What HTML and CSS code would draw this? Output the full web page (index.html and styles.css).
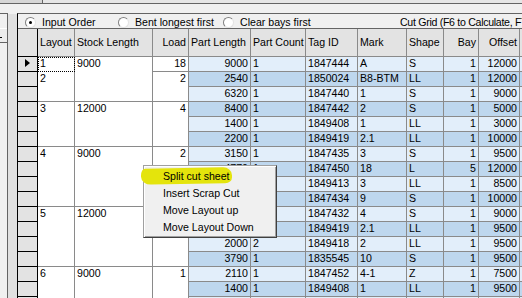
FILE: index.html
```html
<!DOCTYPE html>
<html>
<head>
<link rel="stylesheet" href="styles.css">
</head>
<body>

<div class="win">
    <div class="topbar"><div class="tbtn"></div></div>
    <div class="spacer"></div>

    <div class="main">
        <div class="lpanel"><div class="sbtn"></div></div>
        <div class="lstrip"></div>

        <div class="gridpanel">
            <div class="opts">
                <label class="opt"><span class="radio on"></span>Input Order</label>
                <label class="opt"><span class="radio"></span>Bent longest first</label>
                <label class="opt"><span class="radio"></span>Clear bays first</label>
                <span class="gridtitle">Cut Grid (F6 to Calculate, F7 to Print)</span>
            </div>

            <table class="cut">
                <colgroup>
                    <col class="c-rh"><col class="c-lay"><col class="c-stock"><col class="c-load">
                    <col class="c-plen"><col class="c-pcnt"><col class="c-tag"><col class="c-mark">
                    <col class="c-shape"><col class="c-bay"><col class="c-off"><col class="c-x">
                </colgroup>
                <thead>
                    <tr>
                        <th class="rh"></th>
                        <th>Layout</th>
                        <th>Stock Length</th>
                        <th class="num">Load</th>
                        <th>Part Length</th>
                        <th>Part Count</th>
                        <th>Tag ID</th>
                        <th>Mark</th>
                        <th>Shape</th>
                        <th class="num">Bay</th>
                        <th class="num">Offset</th>
                        <th></th>
                    </tr>
                </thead>
                <tbody>
                    <tr class="lt">
                        <td class="rh"><span class="arrow"></span></td>
                        <td class="w focus">1</td>
                        <td class="w" rowspan="3">9000</td>
                        <td class="w num">18</td>
                        <td class="num">9000</td><td>1</td><td>1847444</td><td>A</td><td>S</td><td class="num">1</td><td class="num">12000</td><td></td>
                    </tr>
                    <tr class="dk">
                        <td class="rh"></td>
                        <td class="w" rowspan="2">2</td>
                        <td class="w num" rowspan="2">2</td>
                        <td class="num">2540</td><td>1</td><td>1850024</td><td>B8-BTM</td><td>LL</td><td class="num">1</td><td class="num">12000</td><td></td>
                    </tr>
                    <tr class="lt">
                        <td class="rh"></td>
                        <td class="num">6320</td><td>1</td><td>1847440</td><td>1</td><td>S</td><td class="num">1</td><td class="num">9000</td><td></td>
                    </tr>
                    <tr class="dk">
                        <td class="rh"></td>
                        <td class="w" rowspan="3">3</td>
                        <td class="w" rowspan="3">12000</td>
                        <td class="w num" rowspan="3">4</td>
                        <td class="num">8400</td><td>1</td><td>1847442</td><td>2</td><td>S</td><td class="num">1</td><td class="num">5000</td><td></td>
                    </tr>
                    <tr class="lt">
                        <td class="rh"></td>
                        <td class="num">1400</td><td>1</td><td>1849408</td><td>1</td><td>LL</td><td class="num">1</td><td class="num">3000</td><td></td>
                    </tr>
                    <tr class="dk">
                        <td class="rh"></td>
                        <td class="num">2200</td><td>1</td><td>1849419</td><td>2.1</td><td>LL</td><td class="num">1</td><td class="num">10000</td><td></td>
                    </tr>
                    <tr class="lt">
                        <td class="rh"></td>
                        <td class="w" rowspan="4">4</td>
                        <td class="w" rowspan="4">9000</td>
                        <td class="w num" rowspan="4">2</td>
                        <td class="num">3150</td><td>1</td><td>1847435</td><td>3</td><td>S</td><td class="num">1</td><td class="num">9500</td><td></td>
                    </tr>
                    <tr class="dk">
                        <td class="rh"></td>
                        <td class="num">4770</td><td>1</td><td>1847450</td><td>18</td><td>L</td><td class="num">5</td><td class="num">12000</td><td></td>
                    </tr>
                    <tr class="lt">
                        <td class="rh"></td>
                        <td class="num">1860</td><td>1</td><td>1849413</td><td>3</td><td>LL</td><td class="num">1</td><td class="num">8500</td><td></td>
                    </tr>
                    <tr class="dk">
                        <td class="rh"></td>
                        <td class="num">2380</td><td>1</td><td>1847434</td><td>9</td><td>S</td><td class="num">1</td><td class="num">10000</td><td></td>
                    </tr>
                    <tr class="lt">
                        <td class="rh"></td>
                        <td class="w" rowspan="4">5</td>
                        <td class="w" rowspan="4">12000</td>
                        <td class="w num" rowspan="4">4</td>
                        <td class="num">5450</td><td>1</td><td>1847432</td><td>4</td><td>S</td><td class="num">1</td><td class="num">9000</td><td></td>
                    </tr>
                    <tr class="dk">
                        <td class="rh"></td>
                        <td class="num">2200</td><td>1</td><td>1849419</td><td>2.1</td><td>LL</td><td class="num">1</td><td class="num">9500</td><td></td>
                    </tr>
                    <tr class="lt">
                        <td class="rh"></td>
                        <td class="num">2000</td><td>2</td><td>1849418</td><td>2</td><td>LL</td><td class="num">1</td><td class="num">9500</td><td></td>
                    </tr>
                    <tr class="dk">
                        <td class="rh"></td>
                        <td class="num">3790</td><td>1</td><td>1835545</td><td>10</td><td>S</td><td class="num">1</td><td class="num">9500</td><td></td>
                    </tr>
                    <tr class="lt">
                        <td class="rh"></td>
                        <td class="w" rowspan="3">6</td>
                        <td class="w" rowspan="3">9000</td>
                        <td class="w num" rowspan="3">1</td>
                        <td class="num">2110</td><td>1</td><td>1847452</td><td>4-1</td><td>Z</td><td class="num">1</td><td class="num">7500</td><td></td>
                    </tr>
                    <tr class="dk">
                        <td class="rh"></td>
                        <td class="num">1400</td><td>1</td><td>1849408</td><td>1</td><td>LL</td><td class="num">1</td><td class="num">9500</td><td></td>
                    </tr>
                    <tr class="lt">
                        <td class="rh"></td>
                        <td class="num">1860</td><td>1</td><td>1849410</td><td>5</td><td>S</td><td class="num">1</td><td class="num">9000</td><td></td>
                    </tr>
                </tbody>
            </table>
        </div>
    </div>

    <!-- right-click menu over the grid -->
    <div class="ctxmenu">
        <span class="marker"></span>
        <div class="mitem">Split cut sheet</div>
        <div class="mitem">Insert Scrap Cut</div>
        <div class="mitem">Move Layout up</div>
        <div class="mitem">Move Layout Down</div>
    </div>
</div>

</body>
</html>
```

FILE: styles.css
```css
body {
    margin: 0;
    background-color: #f0f0f0;
    font-family: "Liberation Sans", Arial, sans-serif;
    font-size: 10.6px;
    color: #000;
}

.win {
    position: relative;
    width: 522px;
    height: 298px;
    overflow: hidden;
}

.topbar {
    height: 3px;
    background-color: #e6e6e6;
    border-bottom: 1px solid #646464;
}

.tbtn {
    width: 42px;
    height: 3px;
    background-color: #d6d6d6;
    border-right: 1px solid #646464;
}

.spacer {
    height: 9px;
}

.main {
    display: flex;
    height: 290px;
}

.lpanel {
    width: 7px;
    border-top: 1px solid #646464;
    border-right: 1px solid #646464;
    background-color: #f0f0f0;
}

.sbtn {
    position: relative;
    margin-top: 14px;
    height: 13px;
    border-top: 1px solid #fff;
    border-bottom: 1px solid #646464;
    background-color: #ececec;
}

.sbtn::after {
    content: "";
    position: absolute;
    left: 0;
    top: 8px;
    width: 2px;
    height: 1px;
    background-color: #000;
}

.lstrip {
    width: 9px;
    margin-top: 1px;
    background-color: #e0e0e0;
}

.gridpanel {
    flex: 1;
    min-width: 0;
    border-top: 1px solid #646464;
    border-left: 1px solid #000;
    overflow: hidden;
}

/* option row */

.opts {
    display: grid;
    grid-template-columns: 93px 105px 177px auto;
    height: 11px;
    padding: 3px 0 0 7px;
    border-bottom: 1px solid #646464;
    line-height: 11px;
    white-space: nowrap;
}

.opt {
    display: flex;
    align-items: center;
    gap: 6px;
}

.radio {
    position: relative;
    width: 11px;
    height: 11px;
    box-sizing: border-box;
    border-radius: 50%;
    background-color: #fff;
    border: 1px solid;
    border-color: #808080 #e3e3e3 #e3e3e3 #808080;
}

.radio.on::after {
    content: "";
    position: absolute;
    left: 3px;
    top: 3px;
    width: 3px;
    height: 3px;
    border-radius: 50%;
    background-color: #000;
}

.gridtitle {
    overflow: hidden;
    letter-spacing: -0.3px;
}

/* cut grid */

.cut {
    border-collapse: separate;
    border-spacing: 0;
    table-layout: fixed;
    width: 562px;
    font-size: 10.6px;
}

.c-rh { width: 20px; }
.c-lay { width: 37px; }
.c-stock { width: 78px; }
.c-load { width: 36px; }
.c-plen { width: 62px; }
.c-pcnt { width: 55px; }
.c-tag { width: 52px; }
.c-mark { width: 49px; }
.c-shape { width: 37px; }
.c-bay { width: 35px; }
.c-off { width: 41px; }
.c-x { width: 60px; }

.cut th,
.cut td {
    box-sizing: border-box;
    height: 15px;
    padding: 0 2px;
    border-right: 1px solid #8a8a8a;
    border-bottom: 1px solid #8a8a8a;
    line-height: 13px;
    text-align: left;
    vertical-align: top;
    white-space: nowrap;
    overflow: hidden;
}

.cut th {
    height: 28px;
    background-color: #e3e3e3;
    font-weight: normal;
    vertical-align: middle;
}

.cut tr.lt td {
    background-color: #e2eefa;
}

.cut tr.dk td {
    background-color: #bed7ee;
}

.cut tr td.w {
    background-color: #fff;
}

.cut tr td.rh,
.cut tr th.rh {
    background-color: #e3e3e3;
    border-color: #000;
    padding: 0;
    text-align: center;
}

.cut .num {
    text-align: right;
}

.cut td.focus {
    border-bottom: none;
    outline: 1px dotted #000;
    outline-offset: -1px;
}

.arrow {
    display: inline-block;
    margin-top: 2px;
    border-left: 5px solid #000;
    border-top: 4px solid transparent;
    border-bottom: 4px solid transparent;
}

/* context menu */

.ctxmenu {
    position: absolute;
    left: 143px;
    top: 165px;
    width: 134px;
    box-sizing: border-box;
    padding: 2px 0 1px;
    background-color: #f0f0f0;
    border: 1px solid;
    border-color: #a0a0a0 #404040 #404040 #a0a0a0;
    box-shadow: inset 1px 1px 0 #fff, inset -1px -1px 0 #a0a0a0;
}

.mitem {
    position: relative;
    height: 17px;
    line-height: 17px;
    padding-left: 19px;
    white-space: nowrap;
}

.marker {
    position: absolute;
    left: -3px;
    top: 2px;
    width: 91px;
    height: 16px;
    background-color: #e4e40c;
    border-radius: 4px 9px 7px 10px / 7px 8px 6px 8px;
    transform: rotate(-1deg);
}
```
